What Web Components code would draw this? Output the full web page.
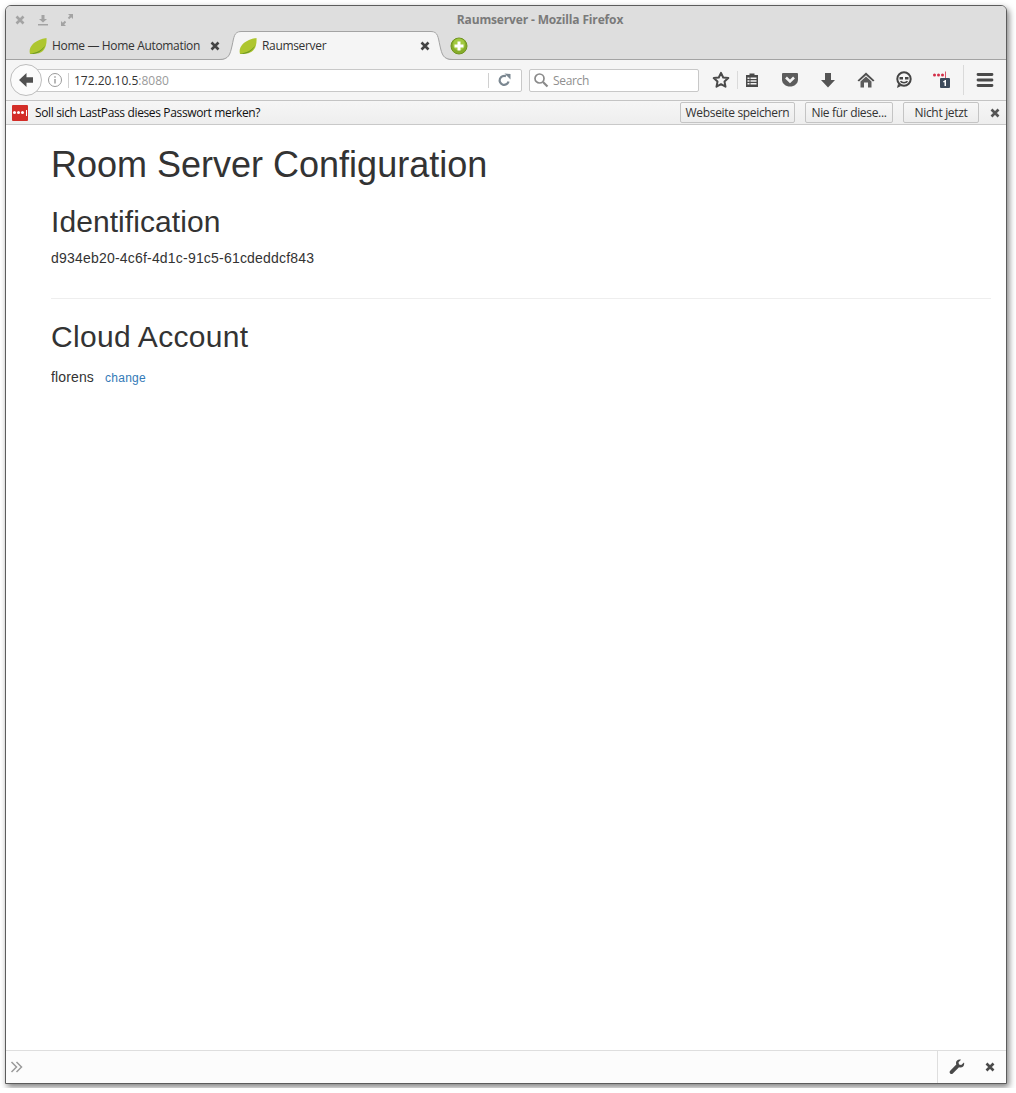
<!DOCTYPE html>
<html>
<head>
<meta charset="utf-8">
<title>Raumserver - Mozilla Firefox</title>
<style>
  html, body { margin: 0; background: #fff; }
  body { padding: 5px 0 0 5px; height: 1088px; box-sizing: border-box; overflow: hidden; }
</style>
</head>
<body>
<ff-window>
  <ff-titlebar>Raumserver - Mozilla Firefox</ff-titlebar>
  <ff-tabstrip>
    <ff-tab>Home — Home Automation</ff-tab>
    <ff-tab active>Raumserver</ff-tab>
  </ff-tabstrip>
  <ff-navbar></ff-navbar>
  <ff-notification>Soll sich LastPass dieses Passwort merken?</ff-notification>
  <room-config></room-config>
  <ff-devbar></ff-devbar>
</ff-window>

<script>
const UI_FONT = '"Open Sans", "Noto Sans", sans-serif';
const TIGHT = "-0.33px";

const ICONS = {
  close: [12, '<path d="M2.500 2.500l7 7M9.500 2.500l-7 7" stroke="currentColor" stroke-width="2.600" fill="none"/>'],
  download: [12, '<path d="M4.500 1h3v4h2.500L6 8.500 2 5h2.500zM1 10h10v1.500H1z" fill="currentColor"/>'],
  expand: [14, '<path d="M8 1h5v5l-1.800-1.800-2 2-1.400-1.400 2-2zM6 13H1V8l1.800 1.800 2-2 1.400 1.400-2 2z" fill="currentColor"/>'],
  leaf: [18, '<path d="M1 17C-1 10 5 3 17.500 1c.5 8-2 15-10 15.500-2.500.2-5 .5-6.500.5z" fill="#aec62f"/><path d="M1 17c6 .5 12-1.500 15.500-9-3 4.500-8 7.500-15.500 9z" fill="#6f9a25"/>'],
  newtab: [18, '<circle cx="9" cy="9" r="8" fill="#86ad2a" stroke="#6f9320"/><circle cx="9" cy="7.500" r="6" fill="#a2c940"/><path d="M9 4.500v9M4.500 9h9" stroke="#fff" stroke-width="3"/>'],
  back: [16, '<path d="M8.500 1L1 8l7.500 7v-4.200H15V5.200H8.500z" fill="#505050"/>'],
  info: [16, '<circle cx="8" cy="8" r="6.500" fill="none" stroke="#9a9a9a"/><path d="M7.300 7h1.400v4.500H7.300zM7.300 4.200h1.400v1.500H7.300z" fill="#9a9a9a"/>'],
  reload: [14, '<path d="M11.500 8.500A4.500 4.500 0 1 1 9 3.300" fill="none" stroke="#7b8791" stroke-width="2.200"/><path d="M7.500 0.500L13.500 1v5.500z" fill="#7b8791"/>'],
  search: [16, '<circle cx="6.500" cy="6.500" r="4.500" fill="none" stroke="#8a8a8a" stroke-width="1.700"/><path d="M10 10l4.500 4.500" stroke="#8a8a8a" stroke-width="2.200"/>'],
  star: [18, '<path d="M9 1.800l2.200 4.700 5.100.6-3.800 3.500 1 5.100L9 13.200l-4.500 2.500 1-5.100L1.700 7.100l5.100-.6z" fill="none" stroke="#4a4a4a" stroke-width="2" stroke-linejoin="round"/>'],
  clipboard: [16, '<path d="M5.500 1.500h5V3h3.500v12H2V3h3.500z" fill="#4a4a4a"/><path d="M3.500 5.500h2v1.500h-2zM6.500 5.500h6v1.500h-6zM3.500 8.200h2v1.500h-2zM6.500 8.200h6v1.500h-6zM3.500 11h2v1.500h-2zM6.500 11h6v1.500h-6z" fill="#f4f4f4"/>'],
  pocket: [18, '<path d="M2 2h14a1 1 0 0 1 1 1v5.500c0 4.300-3.700 7-8 7s-8-2.700-8-7V3a1 1 0 0 1 1-1z" fill="#5c5c5c"/><path d="M5 6.500l4 4 4-4" fill="none" stroke="#f4f4f4" stroke-width="2.600"/>'],
  arrowdown: [16, '<path d="M5 1h6v7h4l-7 7.500L1 8h4z" fill="#555"/>'],
  home: [18, '<path d="M9 1.500L.5 9.500 2 10.500 9 4.200l7 6.300 1.500-1z" fill="#4f4f4f"/><path d="M9 5.500l-5.500 5v6h3.500v-5h4v5h3.500v-6z" fill="#5c5c5c"/>'],
  chat: [18, '<circle cx="9" cy="8" r="6.700" fill="none" stroke="#444" stroke-width="2"/><path d="M3 13l-1 4 4-2z" fill="#444"/><path d="M4.500 6h3.500v2.500H4.500zM10 6h3.500v2.500H10z" fill="#444"/><path d="M5.500 10.300c1.500 1.800 5.500 1.800 7 0" fill="none" stroke="#444" stroke-width="1.500"/>'],
  lastpass: [20, '<circle cx="2.500" cy="5" r="1.500" fill="#d32d47"/><circle cx="6.500" cy="5" r="1.500" fill="#d32d47"/><circle cx="10.500" cy="5" r="1.500" fill="#d32d47"/><path d="M13.200 1.500h.8v7h-.8z" fill="#d32d47"/><rect x="8" y="8" width="10" height="10" rx="1" fill="#3d4b5c"/><path d="M12.500 10h1.500v6h-1.500zM11.200 11h1.300v1.200h-1.300z" fill="#fff"/>'],
  menu: [18, '<path d="M2 3.500h14M2 9h14M2 14.500h14" stroke="#4a4a4a" stroke-width="2.800" stroke-linecap="round"/>'],
  chevrons: [14, '<path d="M1.500 2l5 5-5 5M6.500 2l5 5-5 5" fill="none" stroke="#9a9a9a" stroke-width="1.500"/>'],
  wrench: [16, '<path d="M15 3.500l-2.800 2.500-2.200-.5-.5-2.200L12 .8C9.500 0 7 1.500 7 4c0 .6.100 1.100.300 1.600L1.200 11.800a1.800 1.800 0 0 0 2.600 2.600l6.200-6.100c.5.2 1 .3 1.600.3 2.500 0 4.200-2.500 3.400-5.100z" fill="#4a4a4a"/>'],
};

class FfIcon extends HTMLElement {
  constructor() {
    super();
    const [box, body] = ICONS[this.getAttribute("name")];
    const size = this.getAttribute("size") || box;
    this.attachShadow({ mode: "open" }).innerHTML = `
      <style>
        :host { display: inline-flex; flex: none; line-height: 0; }
      </style>
      <svg width="${size}" height="${size}" viewBox="0 0 ${box} ${box}">${body}</svg>`;
  }
}
customElements.define("ff-icon", FfIcon);

class FfWindow extends HTMLElement {
  constructor() {
    super();
    this.attachShadow({ mode: "open" }).innerHTML = `
      <style>
        :host {
          display: flex;
          flex-direction: column;
          width: 1002px;
          height: 1079px;
          box-sizing: border-box;
          border: 1px solid #5c5c5c;
          border-radius: 6px 6px 0 0;
          box-shadow: 2px 3px 6px rgba(0, 0, 0, 0.5);
          background: #fff;
          overflow: hidden;
          font-family: ${UI_FONT};
        }
      </style>
      <slot></slot>`;
  }
}
customElements.define("ff-window", FfWindow);

class FfTitlebar extends HTMLElement {
  constructor() {
    super();
    this.attachShadow({ mode: "open" }).innerHTML = `
      <style>
        :host {
          display: block;
          position: relative;
          flex: none;
          height: 25px;
          background: #dedede;
        }
        .buttons {
          display: flex;
          align-items: center;
          gap: 11px;
          height: 27px;
          padding-left: 8px;
          color: #a3a3a3;
        }
        .title {
          position: absolute;
          left: 0;
          right: 0;
          top: 5px;
          padding-left: 68px;
          text-align: center;
          font-size: 12px;
          letter-spacing: -0.15px;
          line-height: 17px;
          font-weight: 700;
          color: #7a7a7a;
        }
      </style>
      <div class="buttons">
        <ff-icon name="close"></ff-icon>
        <ff-icon name="download"></ff-icon>
        <ff-icon name="expand"></ff-icon>
      </div>
      <div class="title"><slot></slot></div>`;
  }
}
customElements.define("ff-titlebar", FfTitlebar);

class FfTabstrip extends HTMLElement {
  constructor() {
    super();
    this.attachShadow({ mode: "open" }).innerHTML = `
      <style>
        :host {
          display: flex;
          flex: none;
          align-items: flex-end;
          height: 29px;
          box-sizing: border-box;
          background: #dedede;
          box-shadow: inset 0 -1px 0 #a3a3a3;
          padding-left: 23px;
        }
        .new { margin-left: 19px; align-self: center; }
      </style>
      <slot></slot>
      <ff-icon class="new" name="newtab"></ff-icon>`;
  }
}
customElements.define("ff-tabstrip", FfTabstrip);

class FfTab extends HTMLElement {
  constructor() {
    super();
    const active = this.hasAttribute("active");
    const curve = `
      <path d="M0 29c10 0 11-5 13-14C15 6 15 0 22 0v29z" fill="#f5f5f5"/>
      <path d="M0 28.500c10 0 11-5 13-13.500C15 6 15 .5 22 .5" fill="none" stroke="#a3a3a3"/>`;
    this.attachShadow({ mode: "open" }).innerHTML = `
      <style>
        :host {
          display: flex;
          align-items: center;
          position: relative;
          flex: none;
          box-sizing: border-box;
          height: 29px;
          width: 192px;
          margin-left: ${active ? 18 : 0}px;
          font-size: 12px;
          letter-spacing: ${TIGHT};
          color: #333;
          background: ${active ? "#f5f5f5" : "transparent"};
          ${active ? "box-shadow: inset 0 1px 0 #a3a3a3;" : ""}
        }
        .leaf, .label, .x { position: relative; z-index: 1; }
        .label { margin-left: 5px; flex: 1; white-space: nowrap; line-height: 16px; }
        .x { color: #444; }
        .curve { position: absolute; top: 0; height: 29px; width: 22px; }
        .curve.l { left: -20px; }
        .curve.r { right: -22px; transform: scaleX(-1); }
      </style>
      <ff-icon class="leaf" name="leaf"></ff-icon>
      <span class="label"><slot></slot></span>
      <ff-icon class="x" name="close"></ff-icon>
      ${active ? `
      <svg class="curve l" viewBox="0 0 22 29">${curve}</svg>
      <svg class="curve r" viewBox="0 0 22 29">${curve}</svg>` : ""}`;
  }
}
customElements.define("ff-tab", FfTab);

class FfNavbar extends HTMLElement {
  constructor() {
    super();
    this.attachShadow({ mode: "open" }).innerHTML = `
      <style>
        :host {
          display: flex;
          flex: none;
          align-items: center;
          height: 41px;
          box-sizing: border-box;
          padding: 0 0 0 4px;
          background: #f5f5f5;
          border-bottom: 1px solid #c4c4c4;
        }
        .back {
          display: flex;
          align-items: center;
          justify-content: center;
          flex: none;
          position: relative;
          z-index: 1;
          box-sizing: border-box;
          width: 32px;
          height: 32px;
          border-radius: 50%;
          border: 1px solid #bdbdbd;
          background: #fbfbfb;
        }
        .url, .search {
          display: flex;
          align-items: center;
          flex: none;
          height: 23px;
          box-sizing: border-box;
          background: #fff;
          border: 1px solid #c8c8c8;
          border-radius: 2px;
          font-size: 12px;
          color: #333;
        }
        .url { width: 489px; margin-left: -9px; padding-left: 13px; }
        .sep { width: 1px; height: 15px; background: #d0d0d0; flex: none; }
        .addr { flex: 1; margin-left: 5px; white-space: nowrap; }
        .addr span { color: #9a9a9a; }
        .reload { margin: 0 10px 0 8px; }
        .search { width: 170px; margin-left: 7px; padding-left: 3px; color: #8f8f8f; letter-spacing: ${TIGHT}; }
        .search span { margin-left: 4px; }
        .btn { display: flex; align-items: center; justify-content: center; flex: none; height: 30px; width: 38px; }
        .bar { width: 1px; background: #dadada; flex: none; }
      </style>
      <div class="back"><ff-icon name="back"></ff-icon></div>
      <div class="url">
        <ff-icon name="info"></ff-icon>
        <div class="sep" style="margin-left:5px"></div>
        <div class="addr">172.20.10.5<span>:8080</span></div>
        <div class="sep"></div>
        <ff-icon class="reload" name="reload"></ff-icon>
      </div>
      <div class="search"><ff-icon name="search"></ff-icon><span>Search</span></div>
      <div class="btn" style="width:32px;margin-left:6px"><ff-icon name="star"></ff-icon></div>
      <div class="bar" style="height:18px"></div>
      <div class="btn" style="width:28px"><ff-icon name="clipboard"></ff-icon></div>
      <div class="btn" style="margin-left:5px"><ff-icon name="pocket"></ff-icon></div>
      <div class="btn"><ff-icon name="arrowdown"></ff-icon></div>
      <div class="btn"><ff-icon name="home"></ff-icon></div>
      <div class="btn"><ff-icon name="chat"></ff-icon></div>
      <div class="btn"><ff-icon name="lastpass"></ff-icon></div>
      <div class="bar" style="margin-left:2px;height:30px"></div>
      <div class="btn" style="width:42px"><ff-icon name="menu"></ff-icon></div>`;
  }
}
customElements.define("ff-navbar", FfNavbar);

class FfNotification extends HTMLElement {
  constructor() {
    super();
    this.attachShadow({ mode: "open" }).innerHTML = `
      <style>
        :host {
          display: flex;
          flex: none;
          align-items: center;
          height: 24px;
          box-sizing: border-box;
          padding: 0 5px 0 6px;
          background: linear-gradient(#f6f6f6, #eeeeee);
          border-bottom: 1px solid #c9c9c9;
          font-size: 12px;
          letter-spacing: -0.36px;
          color: #111;
        }
        .logo {
          display: flex;
          align-items: center;
          justify-content: center;
          gap: 1px;
          flex: none;
          width: 16px;
          height: 16px;
          border-radius: 1px;
          background: #d32d27;
        }
        .logo i { width: 3px; height: 3px; border-radius: 50%; background: #fff; }
        .logo b { width: 1px; height: 6px; background: #fff; margin-left: 1px; }
        .msg { flex: 1; margin-left: 7px; white-space: nowrap; }
        button {
          height: 21px;
          box-sizing: border-box;
          margin: 0 0 0 10px;
          padding: 0;
          font: 12px ${UI_FONT};
          letter-spacing: ${TIGHT};
          color: #333;
          background: linear-gradient(#f7f7f7, #ececec);
          border: 1px solid #c4c4c4;
          border-radius: 2px;
        }
        ff-icon { color: #555; margin-left: 10px; }
      </style>
      <div class="logo"><i></i><i></i><i></i><b></b></div>
      <span class="msg"><slot></slot></span>
      <button style="width:115px">Webseite speichern</button>
      <button style="width:88px">Nie für diese...</button>
      <button style="width:76px">Nicht jetzt</button>
      <ff-icon name="close"></ff-icon>`;
  }
}
customElements.define("ff-notification", FfNotification);

class RoomConfig extends HTMLElement {
  constructor() {
    super();
    this.attachShadow({ mode: "open" }).innerHTML = `
      <style>
        :host {
          display: block;
          flex: 1;
          padding: 0 15px 0 45px;
          background: #fff;
          font: 14px/20px "Liberation Sans", Arial, sans-serif;
          color: #333;
        }
        h1, h2 { font-weight: 500; line-height: 1.1; margin: 20px 0 10px; }
        h1 { font-size: 36px; }
        h2 { font-size: 30px; letter-spacing: 0.07px; }
        h2.cloud { margin-top: 21px; letter-spacing: 0.3px; }
        p { margin: 0 0 10px; }
        .uuid { letter-spacing: 0.2px; }
        hr { border: 0; border-top: 1px solid #eee; margin: 30px 0 20px; }
        .account { margin-top: 14px; letter-spacing: 0.14px; }
        a { color: #337ab7; text-decoration: none; font-size: 12px; margin-left: 7px; letter-spacing: 0.25px; }
      </style>
      <h1>Room Server Configuration</h1>
      <h2>Identification</h2>
      <p class="uuid">d934eb20-4c6f-4d1c-91c5-61cdeddcf843</p>
      <hr>
      <h2 class="cloud">Cloud Account</h2>
      <p class="account">florens <a href="#">change</a></p>`;
  }
}
customElements.define("room-config", RoomConfig);

class FfDevbar extends HTMLElement {
  constructor() {
    super();
    this.attachShadow({ mode: "open" }).innerHTML = `
      <style>
        :host {
          display: flex;
          flex: none;
          align-items: center;
          height: 33px;
          box-sizing: border-box;
          padding-left: 4px;
          background: #fcfcfc;
          border-top: 1px solid #dedede;
          color: #4a4a4a;
        }
        .fill { flex: 1; }
        .tools {
          display: flex;
          align-items: center;
          align-self: stretch;
          width: 69px;
          box-sizing: border-box;
          border-left: 1px solid #dedede;
          padding-left: 11px;
          gap: 19px;
        }
      </style>
      <ff-icon name="chevrons"></ff-icon>
      <div class="fill"></div>
      <div class="tools">
        <ff-icon name="wrench"></ff-icon>
        <ff-icon name="close"></ff-icon>
      </div>`;
  }
}
customElements.define("ff-devbar", FfDevbar);
</script>
</body>
</html>
